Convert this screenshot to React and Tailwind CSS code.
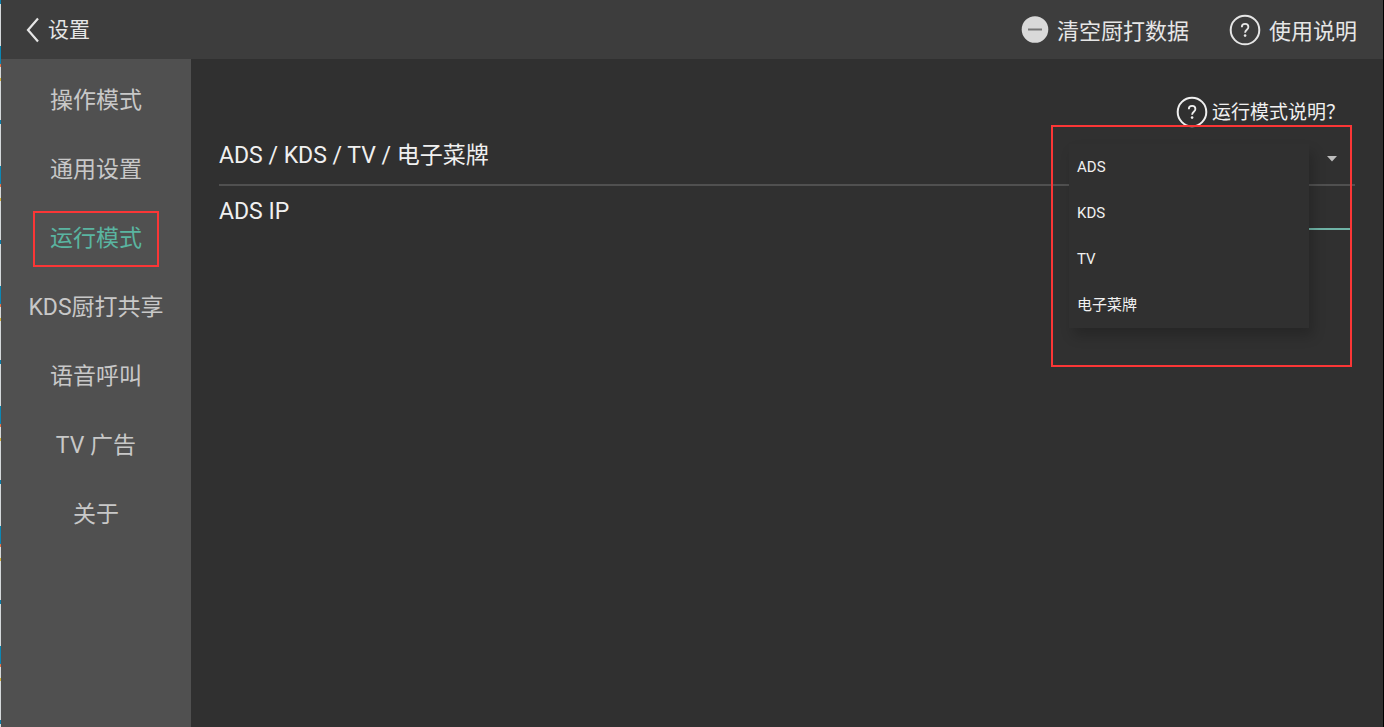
import { useState } from "react";

const menuItems = ["操作模式", "通用设置", "运行模式", "KDS厨打共享", "语音呼叫", "TV 广告", "关于"];
const modes = ["ADS", "KDS", "TV", "电子菜牌"];

function HelpIcon() {
  return (
    <svg width="32" height="32" viewBox="0 0 32 32" fill="none" stroke="currentColor" aria-hidden="true">
      <circle cx="16" cy="16" r="14.3" strokeWidth="2" />
      <path d="M12.8 13.2c0-2 1.300-3.300 3.300-3.300s3.300 1.200 3.300 3c0 2.700-3.300 3-3.300 5.900" strokeWidth="1.8" />
      <circle cx="16.1" cy="21.6" r="1.3" fill="currentColor" stroke="none" />
    </svg>
  );
}

function MinusIcon() {
  return (
    <svg width="28" height="28" viewBox="0 0 28 28" aria-hidden="true">
      <circle cx="14" cy="13.5" r="13.3" fill="#d9d9d9" />
      <path d="M7 13.500h14" stroke="#777777" strokeWidth="2" />
    </svg>
  );
}

function Header() {
  return (
    <header className="flex h-[59px] items-center justify-between bg-[#3d3d3d] pr-[26px] pl-6 text-[22px] text-[#e6e6e6]">
      <button type="button" className="flex items-center gap-2 text-[21px]">
        <svg width="15" height="26" viewBox="0 0 15 26" fill="none" stroke="currentColor" strokeWidth="2.2" aria-hidden="true">
          <path d="M13 1.500 3 13l10 11.500" />
        </svg>
        <span className="pt-[3px]">设置</span>
      </button>
      <div className="flex items-center gap-10">
        <button type="button" className="flex items-center gap-2">
          <MinusIcon />
          <span className="pt-[3px]">清空厨打数据</span>
        </button>
        <a href="#help" className="flex items-center gap-2">
          <HelpIcon />
          <span className="pt-[3px]">使用说明</span>
        </a>
      </div>
    </header>
  );
}

function Sidebar({ active, onSelect }) {
  return (
    <nav className="w-[190px] shrink-0 bg-[#505050] pt-2">
      <ul>
        {menuItems.map((item) => (
          <li key={item} className="relative">
            <button
              type="button"
              onClick={() => onSelect(item)}
              className={`h-[69px] w-full text-center text-[23px] ${item === active ? "text-[#5ab5a1]" : "text-[#c8c8c8]"}`}
            >
              {item}
            </button>
            {item === active && (
              <span className="pointer-events-none absolute inset-x-8 top-[6px] h-14 border-2 border-[#fb3636]" />
            )}
          </li>
        ))}
      </ul>
    </nav>
  );
}

function ModeSelect() {
  const [open, setOpen] = useState(true);
  const [mode, setMode] = useState("");

  const choose = (value) => {
    setMode(value);
    setOpen(false);
  };

  return (
    <div className="relative w-[286px]">
      <button
        type="button"
        aria-label="运行模式"
        aria-haspopup="listbox"
        aria-expanded={open}
        onClick={() => setOpen(!open)}
        className="flex h-[50px] w-full items-center justify-between pr-[18px] pl-2 text-[15px]"
      >
        <span>{mode}</span>
        <svg width="10" height="6" viewBox="0 0 10 6" fill="#bdbdbd" aria-hidden="true">
          <path d="M0 0h10L5 5.500z" />
        </svg>
      </button>
      {open && (
        <ul
          role="listbox"
          aria-label="运行模式"
          className="absolute top-[10px] left-0 z-10 w-60 bg-[#303030] shadow-[4px_8px_12px_rgba(0,0,0,0.2)]"
        >
          {modes.map((item) => (
            <li key={item} role="option" aria-selected={item === mode}>
              <button type="button" onClick={() => choose(item)} className="h-[46px] w-full px-2 text-left text-[15px]">
                {item}
              </button>
            </li>
          ))}
        </ul>
      )}
      <span className="pointer-events-none absolute -top-[9px] -left-[18px] z-20 h-[242px] w-[301px] border-2 border-[#fb3636]" />
    </div>
  );
}

export default function App() {
  const [active, setActive] = useState("运行模式");

  return (
    <div className="flex min-h-screen bg-[#303030] font-['Roboto','Noto_Sans_CJK_SC',sans-serif] text-[#f0f0f0]">
      <div className="w-px shrink-0 bg-[repeating-linear-gradient(#0b7fa8_0px_4px,#d5d9db_4px_46px,#0b86b3_46px_64px,#e0714a_64px_67px,#d5d9db_67px_78px,#d3b33c_78px_81px,#d5d9db_81px_120px)]" />
      <div className="flex min-w-0 flex-1 flex-col border-r border-black">
        <Header />
        <div className="flex flex-1">
          <Sidebar active={active} onSelect={setActive} />
          <main className="min-w-0 flex-1 px-7 pt-[37px]">
            <div className="flex justify-end pr-[10px]">
              <a href="#mode-help" className="flex items-center gap-1 text-[19px]">
                <HelpIcon />
                <span className="pt-[3px]">运行模式说明？</span>
              </a>
            </div>
            <div className="mt-[6px] flex items-start justify-between border-b-2 border-[#505050]">
              <span className="pt-1 text-[23px] leading-[36px]">ADS / KDS / TV / 电子菜牌</span>
              <ModeSelect />
            </div>
            <div className="flex items-start justify-between pr-[5px]">
              <label htmlFor="ads-ip" className="pt-2 text-[23px] leading-[36px]">ADS IP</label>
              <input
                id="ads-ip"
                type="text"
                className="h-11 w-[281px] border-b-2 border-[#6fb3a6] bg-transparent px-2 text-[15px] outline-none"
              />
            </div>
          </main>
        </div>
      </div>
    </div>
  );
}
